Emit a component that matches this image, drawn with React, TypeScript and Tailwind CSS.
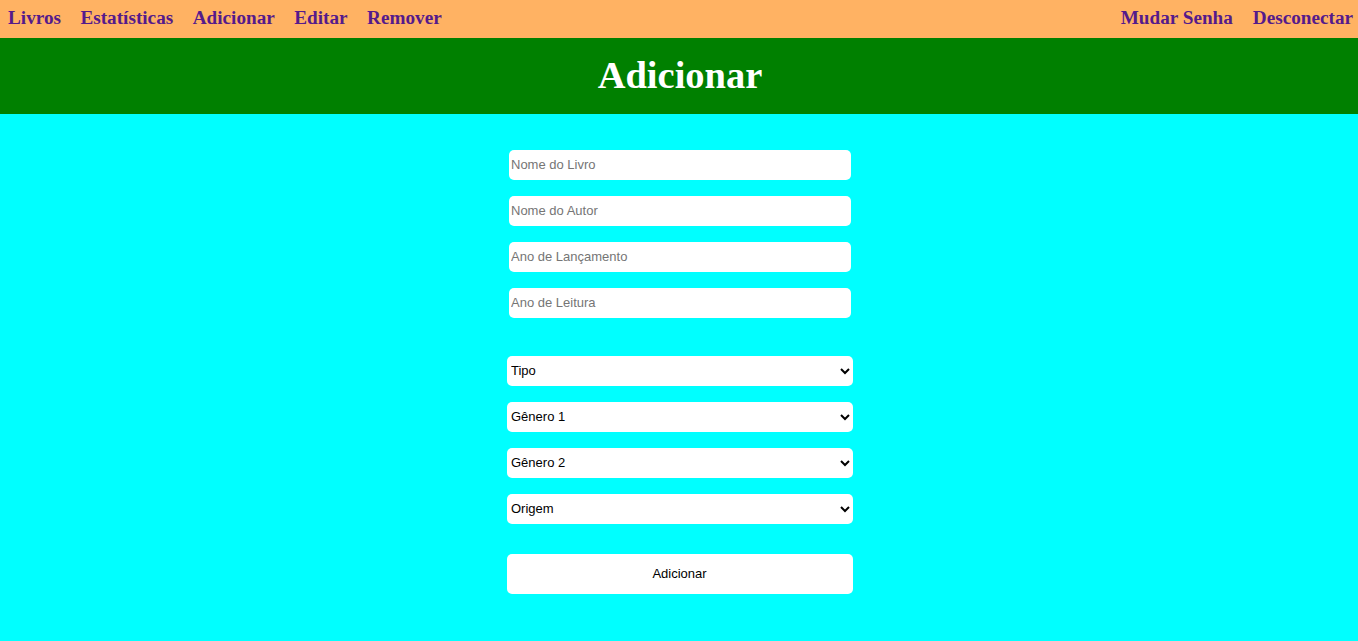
import React from "react";

export default function App() {
  const serif = { fontFamily: '"Liberation Serif", "Times New Roman", serif' };
  const sans = '[font-family:"Liberation_Sans",Arial,sans-serif]';
  return (
    <div className="min-h-[641px] bg-[#00ffff]">
      <nav
        className="flex h-[38px] items-center justify-between bg-[#ffb263] px-[8px] pb-[2px] text-[19.2px] font-bold text-[#551a8b]"
        style={serif}
      >
        <div className="flex gap-[19.5px]">
          <span>Livros</span>
          <span>Estatísticas</span>
          <span>Adicionar</span>
          <span>Editar</span>
          <span>Remover</span>
        </div>
        <div className="flex gap-[20px] mr-[-3px]">
          <span>Mudar Senha</span>
          <span>Desconectar</span>
        </div>
      </nav>
      <header className="flex h-[76px] items-center justify-center bg-[#008000] pl-[2px]">
        <h1 className="text-[38.5px] font-bold text-white" style={serif}>
          Adicionar
        </h1>
      </header>
      <main className={`flex flex-col items-center pl-[2px] pt-[36px] text-[13px] ${sans}`}>
        <div className="flex flex-col gap-[16px]">
          {["Nome do Livro", "Nome do Autor", "Ano de Lançamento", "Ano de Leitura"].map((p) => (
            <input
              key={p}
              placeholder={p}
              className="h-[30px] w-[342px] rounded-[5px] bg-white px-[2px] pb-[2px] text-[13px] text-black placeholder:text-[#757575] outline-none"
            />
          ))}
        </div>
        <div className="mt-[38px] flex flex-col gap-[16px]">
          {["Tipo", "Gênero 1", "Gênero 2", "Origem"].map((o) => (
            <select
              key={o}
              defaultValue={o}
              className="h-[30px] w-[346px] rounded-[5px] bg-white pl-0 pb-[2px] text-[13px] text-black outline-none"
            >
              <option>{o}</option>
            </select>
          ))}
        </div>
        <button className="mt-[30px] h-[40px] w-[346px] rounded-[5px] bg-white pr-[1px] text-[13px] text-black">
          Adicionar
        </button>
      </main>
    </div>
  );
}
